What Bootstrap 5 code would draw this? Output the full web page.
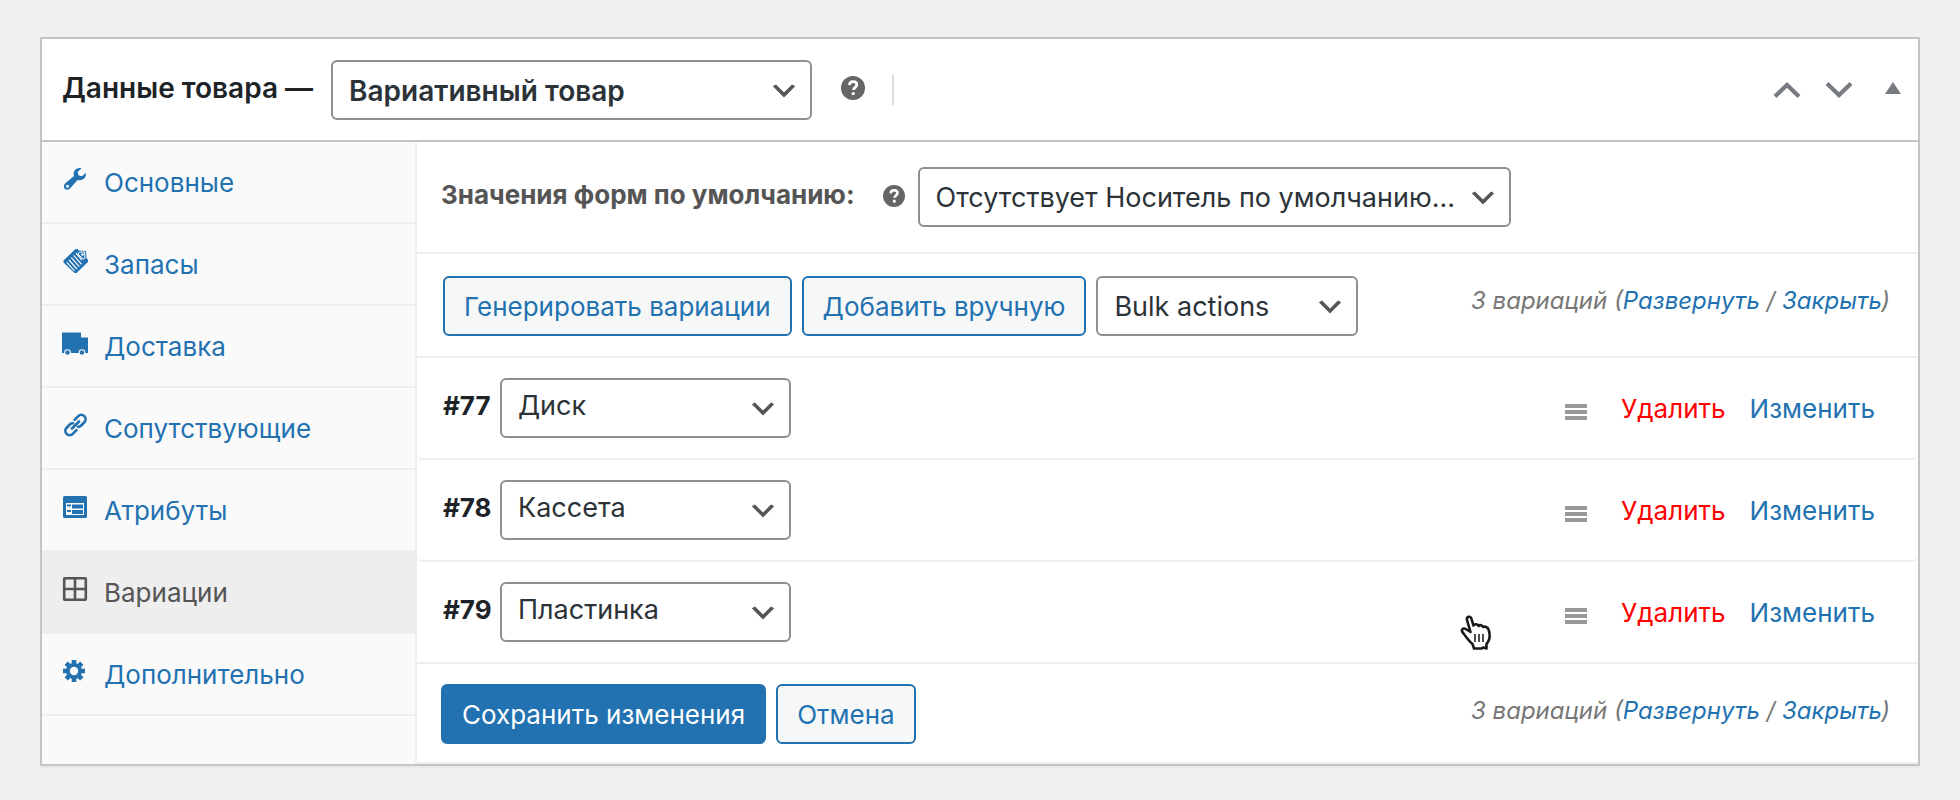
<!DOCTYPE html>
<html lang="ru">
<head>
<meta charset="utf-8">
<meta name="viewport" content="width=device-width, initial-scale=1">
<title>Данные товара</title>
<link href="https://cdn.jsdelivr.net/npm/bootstrap@5.3.0/dist/css/bootstrap.min.css" rel="stylesheet">
<style>
  :root {
    --wp-blue: #2271b1;
    --line: #eee;
    --frame: #c3c4c7;
  }
  body {
    background: #f0f0f0;
    color: #1d2327;
    font-family: Inter, "Liberation Sans", sans-serif;
    font-size: 26px;
    line-height: 32px;
    padding: 37px 40px;
  }
  a { color: var(--wp-blue); text-decoration: none; }
  a:hover { text-decoration: underline; }
  svg { display: block; flex: none; }

  .postbox {
    background: #fff;
    border: 2px solid var(--frame);
    box-shadow: 0 2px 2px rgba(0, 0, 0, .04);
  }
  .postbox-header {
    border-bottom: 2px solid var(--frame);
    min-height: 103px;
    padding: 0 17px 0 20px;
  }
  .postbox-title { font-size: 28px; font-weight: 600; padding-bottom: 4px; margin-right: 18px; }
  .header-rule { width: 2px; height: 30px; background: #dcdcde; }
  .help-type { margin: 0 27px 4px 29px; }
  .order-btn { background: none; border: 0; padding: 0; color: #787c82; }

  .wp-select {
    width: auto;
    height: 60px;
    border: 2px solid #8c8f94;
    border-radius: 6px;
    color: #2c3338;
    font-size: 27px;
    line-height: 32px;
    padding: 2px 44px 0 16px;
    background: #fff url("data:image/svg+xml,%3Csvg xmlns='http://www.w3.org/2000/svg' viewBox='0 0 20 20'%3E%3Cpath d='M5 6l5 5 5-5 2 1-7 7-7-7 2-1z' fill='%23555'/%3E%3C/svg%3E") no-repeat right 10px top 55% / 32px 32px;
  }
  .type-select { width: 481px; font-size: 28px; font-weight: 600; }
  .default-select { width: 593px; margin-left: 13px; }
  .bulk-select { width: 262px; }
  .attr-select { width: 291px; padding-bottom: 6px; }

  .wp-btn {
    --bs-btn-font-size: 26px;
    --bs-btn-line-height: 32px;
    --bs-btn-padding-x: 19px;
    --bs-btn-border-width: 2px;
    --bs-btn-border-radius: 6px;
    --bs-btn-color: var(--wp-blue);
    --bs-btn-bg: #f6f7f7;
    --bs-btn-border-color: var(--wp-blue);
    --bs-btn-hover-color: #0a4b78;
    --bs-btn-hover-bg: #f0f0f1;
    --bs-btn-hover-border-color: #0a4b78;
    padding-top: 13px;
    padding-bottom: 11px;
  }
  .wp-btn-primary {
    --bs-btn-color: #fff;
    --bs-btn-bg: var(--wp-blue);
    --bs-btn-hover-color: #fff;
    --bs-btn-hover-bg: #135e96;
  }

  .data-tabs {
    flex: 0 0 375px;
    background: #fafafa;
    border-right: 2px solid var(--line);
  }
  .data-tabs a {
    display: flex;
    align-items: center;
    gap: 16px;
    height: 82px;
    padding: 2px 18px 0;
    border-bottom: 2px solid var(--line);
  }
  .data-tabs a.active { background: var(--line); color: #555; }
  .data-tabs svg { width: 28px; height: 28px; margin-bottom: 8px; }

  .defaults-row { min-height: 112px; padding: 0 24px; border-bottom: 2px solid var(--line); }
  .defaults-label { color: #555; font-weight: 700; padding-bottom: 4px; }
  .help-default { margin: 0 0 2px 28px; }
  .tools-row { min-height: 104px; padding: 2px 28px 0 26px; border-bottom: 2px solid var(--line); }
  .save-row { min-height: 100px; padding: 2px 28px 0 24px; border-bottom: 2px solid var(--line); }
  .btn-row { gap: 10px; }
  .variation { min-height: 102px; padding: 0 43px 0 26px; border-bottom: 2px solid var(--line); }
  .variation:not(:last-child) { border-radius: 0 0 6px 6px; }
  .variation-id { width: 57px; font-weight: 700; padding-bottom: 4px; }
  .variation a { padding-top: 2px; }
  .counter { color: #777; font-size: 24px; font-style: italic; padding-bottom: 10px; }
  .save-row .counter { padding-bottom: 6px; }
  .drag-handle { color: #999; margin: 8px 34px 0 0; }
  .remove-link { color: #f00; margin-right: 24px; }
  .hand { position: absolute; right: 426px; bottom: 11px; }
</style>
</head>
<body>
<svg width="0" height="0" class="position-absolute" aria-hidden="true">
  <symbol id="help" viewBox="0 0 24 24">
    <circle cx="12" cy="12" r="12" fill="#666"/>
    <path d="M8.400 9.100C8.500 6.700 10 5.700 12.100 5.700s3.700 1.100 3.700 3.100c0 2.500-3.200 2.700-3.200 5.200" fill="none" stroke="#fff" stroke-width="2.800"/>
    <circle cx="12.300" cy="17.600" r="1.700" fill="#fff"/>
  </symbol>
  <symbol id="handle" viewBox="0 0 22 16">
    <path d="M0 0h22v4H0zM0 6h22v4H0zM0 12h22v4H0z" fill="currentColor"/>
  </symbol>
</svg>

<main class="postbox">
  <header class="postbox-header d-flex align-items-center">
    <label class="postbox-title" for="product-type">Данные товара —</label>
    <select id="product-type" class="form-select wp-select type-select">
      <option>Вариативный товар</option>
      <option>Простой товар</option>
    </select>
    <svg class="help-type" width="24" height="24" aria-hidden="true"><use href="#help"/></svg>
    <span class="header-rule"></span>
    <div class="d-flex align-items-center ms-auto">
      <button class="order-btn me-4" type="button" aria-label="Вверх">
        <svg width="28" height="16" viewBox="0 0 28 16"><path d="M2 14.500 14 3l12 11.500" fill="none" stroke="currentColor" stroke-width="4.200"/></svg>
      </button>
      <button class="order-btn me-4" type="button" aria-label="Вниз">
        <svg width="28" height="16" viewBox="0 0 28 16"><path d="M2 1.500 14 13 26 1.500" fill="none" stroke="currentColor" stroke-width="4.200"/></svg>
      </button>
      <button class="order-btn ms-2 mb-1" type="button" aria-label="Свернуть">
        <svg width="16" height="12" viewBox="0 0 16 12"><path d="M8 0l8 12H0z" fill="currentColor"/></svg>
      </button>
    </div>
  </header>

  <div class="d-flex">
    <nav class="data-tabs" aria-label="Разделы">
      <a href="#general">
        <svg viewBox="0 0 28 28" aria-hidden="true"><path d="M21.500 3.200c-2.800-.7-5.700.2-7 2.600-1 1.800-1.100 3.500-.5 5.100L5.300 18.200c-2 1.700-1.900 4.300-.3 5.700 1.600 1.300 4 1 5.400-.8l7.200-8.200c2.900.8 5.800 0 7.400-2.500.8-1.300 1.100-3 .8-4.600l-3.800 3.400-3.500-.9-.8-3.400z" fill="currentColor"/><circle cx="7.500" cy="21.200" r="1.500" fill="#fafafa"/></svg>
        <span>Основные</span>
      </a>
      <a href="#inventory">
        <svg viewBox="0 0 28 28" aria-hidden="true"><path d="M15.500 2h2L19 3.500l7 .5.500 7 1.500 2v2L16.500 26h-2L3.500 15.500v-2z" fill="currentColor"/><path d="M9 13l8 9M11.300 10.700l8 9M13.600 8.400l8 9M6.800 15.300l7.700 8.500M15.900 6.100l6 6.900" stroke="#fafafa" stroke-width="1.200"/><path d="M19.500 5h5l.5 6-2 1-5-5z" fill="none" stroke="#fafafa"/><circle cx="22.500" cy="7.500" r="1.300" fill="#fafafa"/></svg>
        <span>Запасы</span>
      </a>
      <a href="#shipping">
        <svg viewBox="0 0 28 28" aria-hidden="true"><path d="M2 3.500h19v5h7V24H2z" fill="currentColor"/><circle cx="7.500" cy="23.500" r="3.300" fill="#fafafa"/><circle cx="22" cy="23.500" r="3.300" fill="#fafafa"/><circle cx="7.500" cy="23.500" r="2.200" fill="currentColor"/><circle cx="22" cy="23.500" r="2.200" fill="currentColor"/></svg>
        <span>Доставка</span>
      </a>
      <a href="#linked">
        <svg viewBox="0 0 28 28" fill="none" stroke="currentColor" aria-hidden="true"><g transform="rotate(-45 15.500 14)" stroke-width="2.700" stroke-linecap="round"><path d="M12.500 18.300H7.300a4.300 4.300 0 0 1 0-8.600h4.500c1.400 0 2.500.5 3.200 1.300"/><path d="M18.500 9.700h5.200a4.300 4.300 0 0 1 0 8.600h-4.500c-1.400 0-2.500-.5-3.200-1.300"/><path d="M10.500 14h10"/></g></svg>
        <span>Сопутствующие</span>
      </a>
      <a href="#attributes">
        <svg viewBox="0 0 28 28" aria-hidden="true"><rect x="3" y="3" width="24" height="22" rx="1.500" fill="currentColor"/><path d="M6 10h18v12H6z" fill="#fafafa"/><path d="M12 11.500h11v4H12zM12 17h11v4H12zM7 11.500h4v2H7zM7 17h4v2H7z" fill="currentColor"/></svg>
        <span>Атрибуты</span>
      </a>
      <a href="#variations" class="active" aria-current="page">
        <svg viewBox="0 0 28 28" fill="none" stroke="currentColor" aria-hidden="true"><rect x="4.200" y="3.200" width="21.600" height="21.600" rx=".5" stroke-width="2.600"/><path d="M15 3v22M4 14h22" stroke-width="2.600"/></svg>
        <span>Вариации</span>
      </a>
      <a href="#advanced">
        <svg viewBox="0 0 28 28" aria-hidden="true"><g stroke="currentColor" stroke-width="4.600"><path d="M14 3v22M3 14h22M6.200 6.200l15.600 15.600M21.800 6.200 6.200 21.800"/></g><circle cx="14" cy="14" r="8" fill="currentColor"/><circle cx="14" cy="14" r="4.200" fill="#fafafa"/></svg>
        <span>Дополнительно</span>
      </a>
    </nav>

    <section class="flex-grow-1" id="variations">
      <div class="defaults-row d-flex align-items-center">
        <label class="defaults-label" for="default-form">Значения форм по умолчанию:</label>
        <svg class="help-default" width="22" height="22" aria-hidden="true"><use href="#help"/></svg>
        <select id="default-form" class="form-select wp-select default-select">
          <option>Отсутствует Носитель по умолчанию...</option>
        </select>
      </div>

      <div class="tools-row btn-row d-flex align-items-center">
        <button type="button" class="btn wp-btn">Генерировать вариации</button>
        <button type="button" class="btn wp-btn">Добавить вручную</button>
        <select class="form-select wp-select bulk-select" aria-label="Bulk actions">
          <option>Bulk actions</option>
        </select>
        <div class="counter ms-auto">3 вариаций (<a href="#expand">Развернуть</a> / <a href="#close">Закрыть</a>)</div>
      </div>

      <div>
        <div class="variation d-flex align-items-center">
          <label class="variation-id" for="attr-77">#77</label>
          <select id="attr-77" class="form-select wp-select attr-select"><option>Диск</option></select>
          <svg class="drag-handle ms-auto" width="22" height="16" aria-hidden="true"><use href="#handle"/></svg>
          <a class="remove-link" href="#remove-77">Удалить</a>
          <a href="#edit-77">Изменить</a>
        </div>
        <div class="variation d-flex align-items-center">
          <label class="variation-id" for="attr-78">#78</label>
          <select id="attr-78" class="form-select wp-select attr-select"><option>Кассета</option></select>
          <svg class="drag-handle ms-auto" width="22" height="16" aria-hidden="true"><use href="#handle"/></svg>
          <a class="remove-link" href="#remove-78">Удалить</a>
          <a href="#edit-78">Изменить</a>
        </div>
        <div class="variation d-flex align-items-center position-relative">
          <label class="variation-id" for="attr-79">#79</label>
          <select id="attr-79" class="form-select wp-select attr-select"><option>Пластинка</option></select>
          <svg class="drag-handle ms-auto" width="22" height="16" aria-hidden="true"><use href="#handle"/></svg>
          <a class="remove-link" href="#remove-79">Удалить</a>
          <a href="#edit-79">Изменить</a>
          <svg class="hand" width="32" height="36" viewBox="0 0 32 36" aria-hidden="true">
            <path d="M10.500 17 7 5C6 1.500 10.500.500 11.500 4l2 6.500c1-2 4.500-1.500 5 .5 1.500-1.500 4-.8 4.500 1 2-1 4.800 0 5.500 2.500 1.500 4 1.500 8 0 11.500L26.500 29v4.500l-3-1-2 1H14l-1.500-4.500C9 26 7 23 3.500 18.500 0 15 3 12 6.500 14.500z" fill="#fff" stroke="#1a1a1a" stroke-width="2.600" stroke-linejoin="round"/>
            <path d="M15 19v8M19 19v8M23 19v8" stroke="#222" stroke-width="1.600"/>
          </svg>
        </div>
      </div>

      <div class="save-row btn-row d-flex align-items-center">
        <button type="button" class="btn wp-btn wp-btn-primary">Сохранить изменения</button>
        <button type="button" class="btn wp-btn">Отмена</button>
        <div class="counter ms-auto">3 вариаций (<a href="#expand">Развернуть</a> / <a href="#close">Закрыть</a>)</div>
      </div>
    </section>
  </div>
</main>
<script src="https://cdn.jsdelivr.net/npm/bootstrap@5.3.0/dist/js/bootstrap.bundle.min.js"></script>
</body>
</html>
